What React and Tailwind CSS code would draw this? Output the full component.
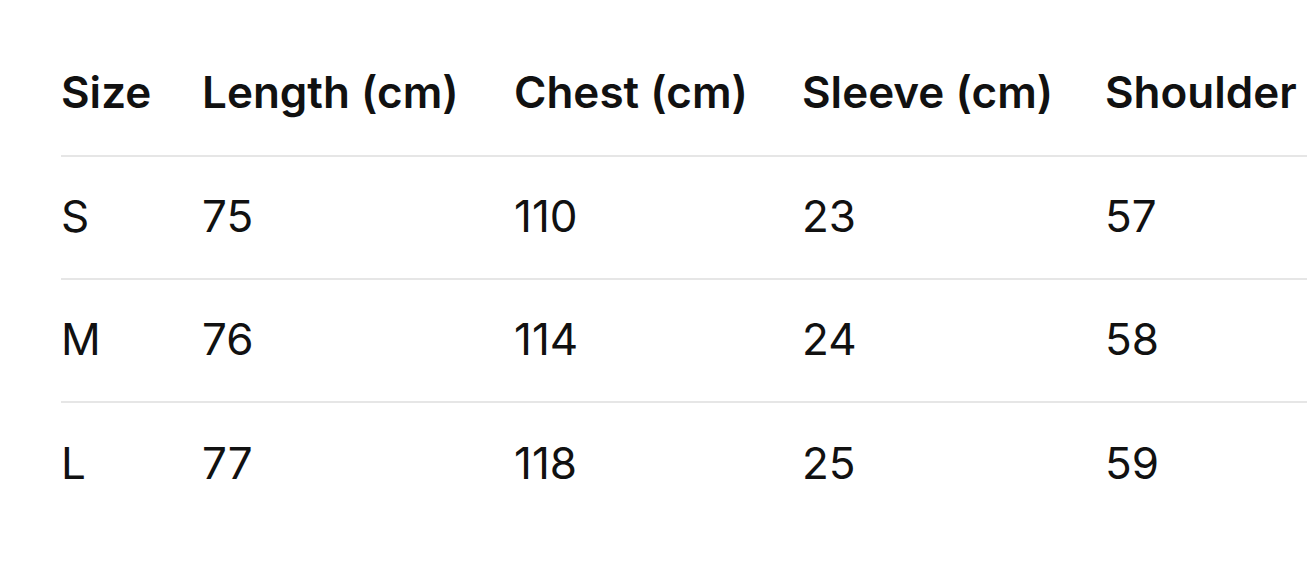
import React from "react";

const rows = [
  ["S", "75", "110", "23", "57"],
  ["M", "76", "114", "24", "58"],
  ["L", "77", "118", "25", "59"],
];

const heads = ["Size", "Length (cm)", "Chest (cm)", "Sleeve (cm)", "Shoulder (cm)"];
const widths = ["w-[141px]", "w-[312px]", "w-[288px]", "w-[303px]", "w-[360px]"];

export default function App() {
  return (
    <div className="w-[1307px] h-[576px] overflow-hidden bg-white pl-[61px] pt-[33px] font-['Inter',sans-serif] text-[#111111]">
      <table className="w-[1404px] table-fixed border-collapse whitespace-nowrap text-[44px] leading-none">
        <thead>
          <tr className="border-b-2 border-[#e6e6e6]">
            {heads.map((h, i) => (
              <th key={h} className={`h-[123px] p-0 pb-[4px] text-left align-middle font-semibold ${widths[i]}`}>
                {h}
              </th>
            ))}
          </tr>
        </thead>
        <tbody>
          {rows.map((r) => (
            <tr key={r[0]} className="border-b-2 border-[#e6e6e6] last:border-b-0">
              {r.map((c, i) => (
                <td key={i} className="h-[123px] p-0 pb-[3px] text-left align-middle font-normal">
                  {c}
                </td>
              ))}
            </tr>
          ))}
        </tbody>
      </table>
    </div>
  );
}
